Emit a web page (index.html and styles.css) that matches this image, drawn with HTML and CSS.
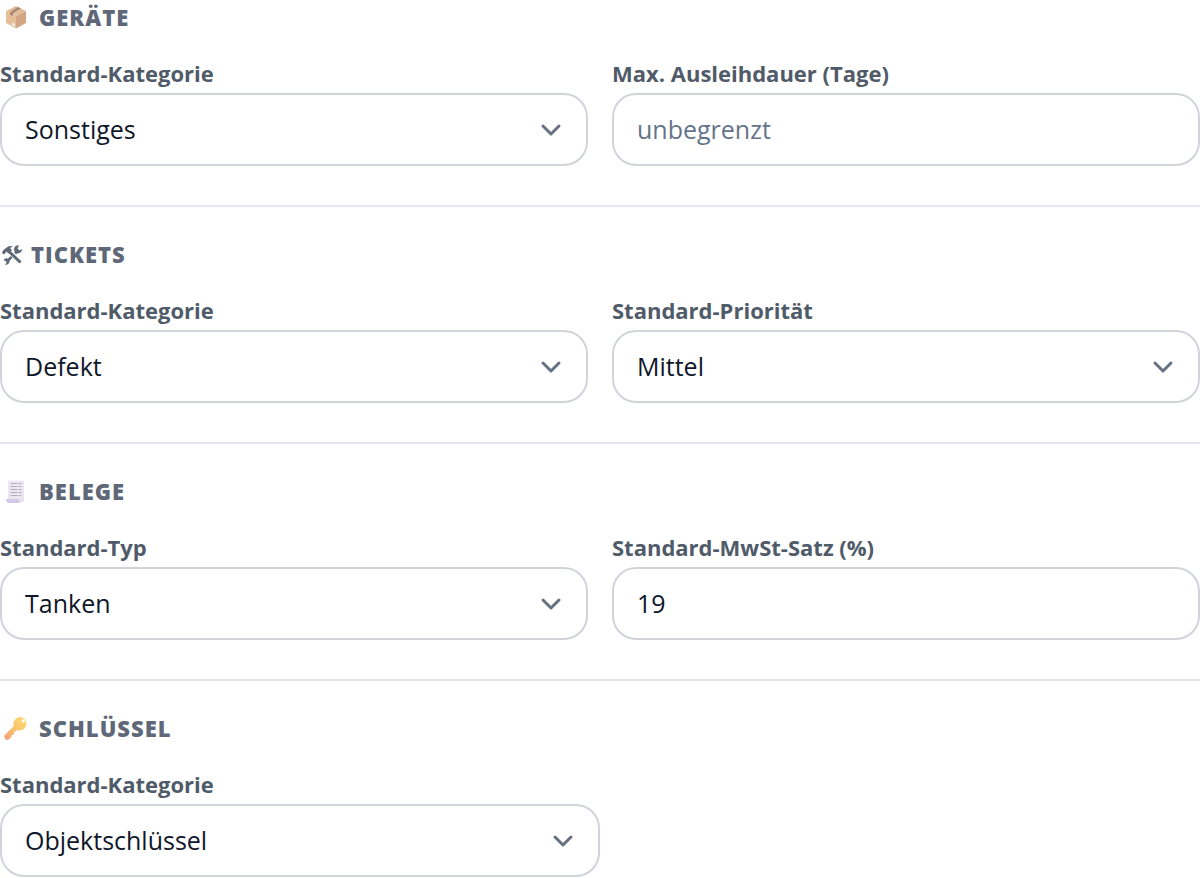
FILE: index.html
```html
<!DOCTYPE html>
<html lang="de">
<head>
  <meta charset="UTF-8" />
  <meta name="viewport" content="width=device-width, initial-scale=1.0"/>
  <title>Standardwerte</title>
  <link rel="stylesheet" href="styles.css">
</head>

<body>
  <form class="settings">
    <section class="settings-section">
      <h2>
        <svg class="icon" viewBox="0 0 24 24" aria-hidden="true">
          <path d="M12 1L22 6L12 11L2 6Z" fill="#e2bd9b"/>
          <path d="M2 6L12 11V23.5L2 18Z" fill="#e5bd98"/>
          <path d="M22 6L12 11V23.5L22 18Z" fill="#d3a585"/>
          <path d="M14 2L17 3.5L9 8V11L6 9.5V7.5Z" fill="#a58672"/>
          <path d="M8 17.5L11 19V21.5L8 20Z" fill="#f0edf2"/>
        </svg>
        Geräte
      </h2>
      <div class="grid">
        <div class="field">
          <label for="device-category">Standard-Kategorie</label>
          <select id="device-category">
            <option>Sonstiges</option>
          </select>
        </div>
        <div class="field">
          <label for="device-days">Max. Ausleihdauer (Tage)</label>
          <input type="text" inputmode="numeric" id="device-days" placeholder="unbegrenzt">
        </div>
      </div>
    </section>

    <section class="settings-section">
      <h2 class="compact">
        <svg class="icon" viewBox="0 0 24 24" aria-hidden="true">
          <path d="M7 19.5L17.5 9" fill="none" stroke="#5f6878" stroke-width="2.6"/>
          <path d="M19 3.5A4 4 0 1 0 22 7L19.5 8.5L17.5 6.5Z" fill="#5f6878"/>
          <path d="M7.5 16.5A3.4 3.4 0 0 0 3.5 18.5L6 19L6.5 21L5 22.5A3.4 3.4 0 0 0 9.5 19Z" fill="#5f6878"/>
          <path d="M10 10L21 20.5" fill="none" stroke="#fff" stroke-width="5"/>
          <path d="M8.5 9L20.5 20.5" fill="none" stroke="#5f6878" stroke-width="3"/>
          <path d="M2 11L3 8.5L8 4.5Q10 3.5 13 4.5L10 6L12 8L8.5 11.5L6.5 9.5L4 12.5Z" fill="#5f6878"/>
        </svg>
        Tickets
      </h2>
      <div class="grid">
        <div class="field">
          <label for="ticket-category">Standard-Kategorie</label>
          <select id="ticket-category">
            <option>Defekt</option>
          </select>
        </div>
        <div class="field">
          <label for="ticket-priority">Standard-Priorität</label>
          <select id="ticket-priority">
            <option>Mittel</option>
          </select>
        </div>
      </div>
    </section>

    <section class="settings-section">
      <h2>
        <svg class="icon" viewBox="0 0 24 24" aria-hidden="true">
          <path d="M4 1L6 2L8 1L10 2L12 1L14 2L16 1L18 2L20 1V21H4Z" fill="#ebe7f2"/>
          <path d="M6.5 4.5H13.5M14.5 4.5H17.5M6.5 7.5H13.5M14.5 7.5H17.5M6.5 10.5H13.5M14.5 10.5H17.5M6.5 13.5H13.5M14.5 13.5H17.5M6.5 16.5H13.5M14.5 16.5H17.5" fill="none" stroke="#b3aebb" stroke-width="1.2"/>
          <path d="M2 20H14.5Q15 22 17 22Q16 24 14 24H5Q2 24 2 20Z" fill="#d5c7e8"/>
          <path d="M14.5 20H20V21Q19.5 23.5 16.5 23.5Q14.5 22.5 14.5 20Z" fill="#e6ddf2"/>
        </svg>
        Belege
      </h2>
      <div class="grid">
        <div class="field">
          <label for="receipt-type">Standard-Typ</label>
          <select id="receipt-type">
            <option>Tanken</option>
          </select>
        </div>
        <div class="field">
          <label for="receipt-vat">Standard-MwSt-Satz (%)</label>
          <input type="text" inputmode="decimal" id="receipt-vat" value="19">
        </div>
      </div>
    </section>

    <section class="settings-section">
      <h2>
        <svg class="icon" viewBox="0 0 24 24" aria-hidden="true">
          <defs>
            <linearGradient id="key" x1="1" y1="0" x2="0" y2="1">
              <stop offset="0" stop-color="#fddd73"/>
              <stop offset="0.5" stop-color="#f9c46d"/>
              <stop offset="1" stop-color="#f3a17c"/>
            </linearGradient>
          </defs>
          <path fill="url(#key)" fill-rule="evenodd" d="M16.5 1A6.8 6.8 0 0 0 9.8 10L0.8 19Q0 20 0.4 21.5Q1 24 3 24Q4.5 24 5.5 23L7.5 21L7.5 19L9.5 19L10 16.5L13 14A6.8 6.8 0 1 0 16.5 1ZM19.3 3.5A1.5 1.5 0 1 1 19.2 3.5Z"/>
        </svg>
        Schlüssel
      </h2>
      <div class="field half">
        <label for="key-category">Standard-Kategorie</label>
        <select id="key-category">
          <option>Objektschlüssel</option>
        </select>
      </div>
    </section>
  </form>
</body>
</html>
```
FILE: styles.css
```css
* {
  box-sizing: border-box;
}

body {
  font-family: "Segoe UI", "Open Sans", "Noto Sans", sans-serif;
  margin: 0;
  background-color: #fff;
  color: #0f172a;
}

.settings-section + .settings-section {
  margin-top: 39px;
  padding-top: 30px;
  border-top: 2px solid #e2e6ee;
}

h2 {
  display: flex;
  align-items: center;
  gap: 11px;
  margin: 0 0 22px;
  padding-left: 4px;
  font-size: 22px;
  line-height: 34px;
  font-weight: 800;
  letter-spacing: 1px;
  text-transform: uppercase;
  color: #5f6878;
}

h2.compact {
  gap: 7px;
  padding-left: 0;
}

.icon {
  width: 24px;
  height: 24px;
  flex: none;
}

.grid {
  display: grid;
  grid-template-columns: 1fr 1fr;
  gap: 24px;
}

.field {
  display: flex;
  flex-direction: column;
  gap: 3px;
}

.half {
  width: 50%;
}

label {
  font-size: 22px;
  line-height: 34px;
  font-weight: 700;
  color: #505b69;
}

select,
input {
  width: 100%;
  height: 73px;
  padding: 0 23px 2px;
  border: 2px solid #d0d4da;
  border-radius: 24px;
  background-color: #fff;
  font-family: inherit;
  font-size: 25px;
  color: #0f172a;
}

select {
  appearance: none;
  background-image: url("data:image/svg+xml,%3Csvg xmlns='http://www.w3.org/2000/svg' viewBox='0 0 24 24' fill='none' stroke='%23667080' stroke-width='3' stroke-linecap='round' stroke-linejoin='round'%3E%3Cpath d='M4 8l8 8 8-8'/%3E%3C/svg%3E");
  background-repeat: no-repeat;
  background-position: right 23px center;
  background-size: 24px 24px;
}

input::placeholder {
  color: #64748b;
  opacity: 1;
}
```
